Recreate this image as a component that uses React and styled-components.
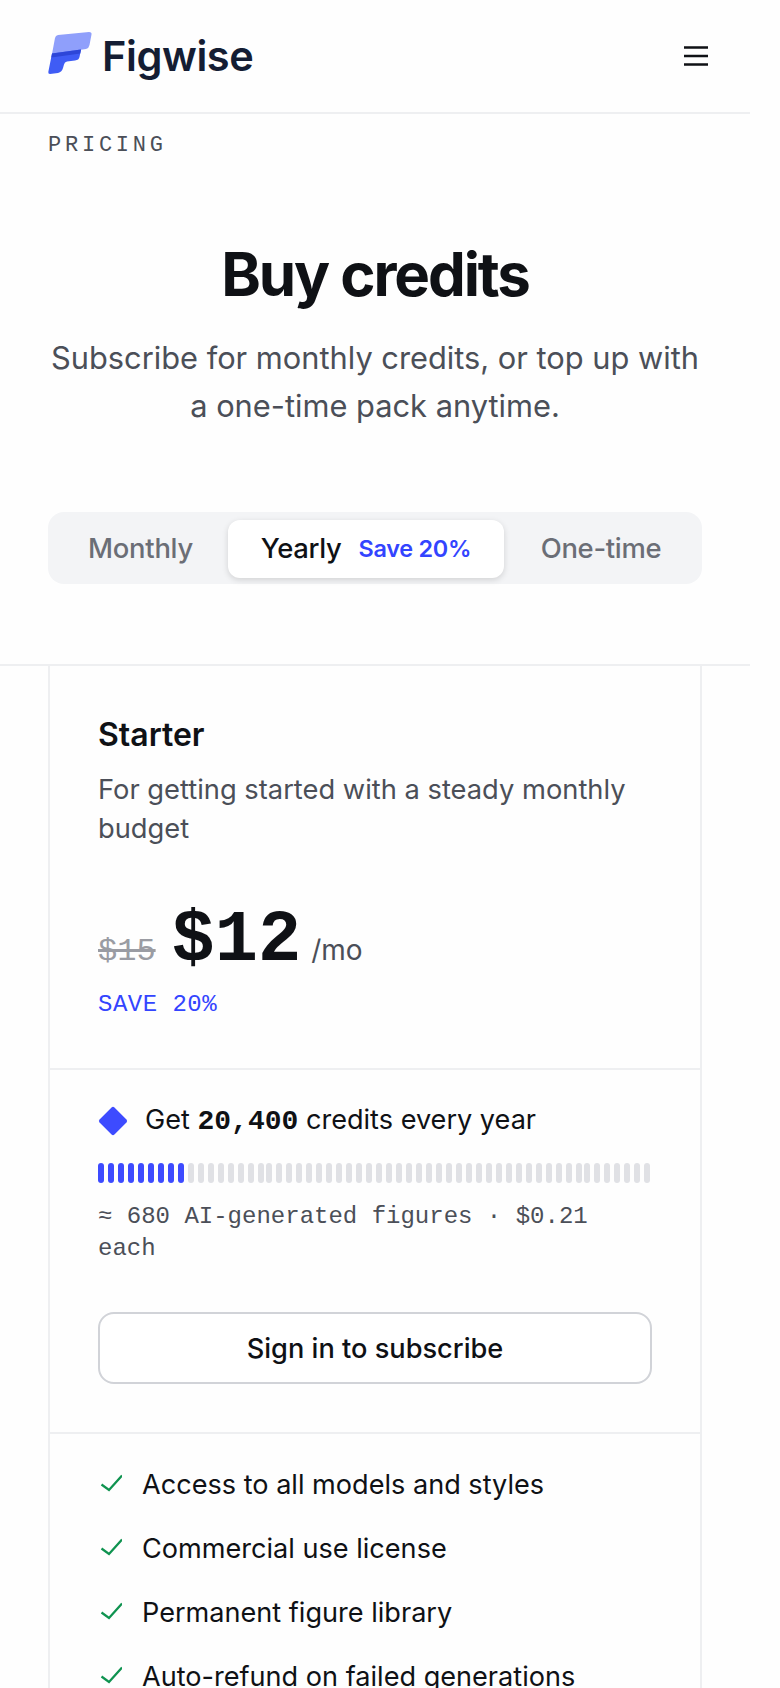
import React from "react";
import styled, { createGlobalStyle } from "styled-components";

const MONO = '"Liberation Mono", "DejaVu Sans Mono", monospace';

const GlobalStyle = createGlobalStyle`
  html, body {
    margin: 0;
    padding: 0;
    height: 1688px;
    overflow: hidden;
    background: #fefefe;
    font-family: Inter, "Noto Sans", sans-serif;
    color: #0f1115;
  }
  * { box-sizing: border-box; }
`;

const Page = styled.div`
  width: 750px;
`;

const Header = styled.header`
  height: 114px;
  padding: 0 48px;
  display: flex;
  align-items: center;
  justify-content: space-between;
  border-bottom: 2px solid #eeeff1;
`;

const Brand = styled.div`
  display: flex;
  align-items: center;
  gap: 10px;
`;

const BrandName = styled.span`
  font-size: 41.5px;
  font-weight: 600;
  letter-spacing: -0.01em;
  color: #141d33;
  line-height: 48px;
`;

const MenuButton = styled.button`
  display: flex;
  margin-right: -6px;
  padding: 0;
  border: 0;
  background: none;
`;

const Eyebrow = styled.div`
  padding: 12px 48px 0;
  height: 52px;
  font-family: ${MONO};
  font-size: 22px;
  line-height: 40px;
  letter-spacing: 3.76px;
  color: #4b4f58;
`;

const Hero = styled.section`
  padding: 72px 48px 80px;
  text-align: center;
  border-bottom: 2px solid #eeeff1;
`;

const Title = styled.h1`
  margin: 0;
  font-size: 60px;
  line-height: 72px;
  font-weight: 700;
  letter-spacing: -0.035em;
`;

const Subtitle = styled.p`
  margin: 24px 0 0;
  font-size: 30.8px;
  line-height: 48px;
  color: #4b4f58;
`;

const Toggle = styled.div`
  margin-top: 82px;
  height: 72px;
  padding: 8px 8px 6px;
  display: flex;
  border-radius: 16px;
  background: #f3f4f6;
`;

const Tab = styled.div`
  flex: 0 0 ${(p) => p.$width}px;
  padding: ${(p) => p.$pad || "0 0 2px"};
  display: flex;
  align-items: center;
  justify-content: center;
  gap: 17px;
  border-radius: 12px;
  font-size: 27.4px;
  font-weight: 500;
  letter-spacing: -0.01em;
  color: ${(p) => (p.$active ? "#0f1115" : "#6b6e76")};
  background: ${(p) => (p.$active ? "#ffffff" : "transparent")};
  box-shadow: ${(p) => (p.$active ? "0 2px 6px rgba(0,0,0,0.14)" : "none")};
`;

const TabBadge = styled.span`
  font-size: 23.4px;
  font-weight: 600;
  color: #3344ff;
`;

const Card = styled.article`
  margin: 0 48px;
  border-left: 2px solid #eeeff1;
  border-right: 2px solid #eeeff1;
`;

const CardBlock = styled.div`
  padding: ${(p) => p.$pad};
  border-bottom: ${(p) => (p.$last ? "0" : "2px solid #eeeff1")};
`;

const PlanName = styled.h2`
  margin: 0;
  font-size: 32px;
  line-height: 40px;
  font-weight: 600;
`;

const PlanDesc = styled.p`
  margin: 15px 0 0;
  font-size: 27.3px;
  line-height: 39px;
  color: #4b4f58;
`;

const PriceRow = styled.div`
  margin-top: 53px;
  display: flex;
  align-items: baseline;
  gap: 16px;
`;

const OldPrice = styled.span`
  font-family: ${MONO};
  font-size: 32px;
  color: #9a9ca3;
  text-decoration: line-through;
`;

const Price = styled.span`
  font-family: ${MONO};
  font-size: 72px;
  line-height: 80px;
  font-weight: 700;
`;

const Period = styled.span`
  margin-left: -6px;
  font-size: 28px;
  color: #4b4f58;
`;

const SaveNote = styled.div`
  margin-top: 8px;
  font-family: ${MONO};
  font-size: 24px;
  line-height: 32px;
  letter-spacing: 0.02em;
  color: #3344ff;
`;

const CreditLine = styled.div`
  display: flex;
  align-items: center;
  gap: 17px;
  font-size: 27.1px;
  line-height: 40px;
`;

const CreditAmount = styled.b`
  font-family: ${MONO};
  font-size: 28px;
  font-weight: 700;
`;

const Meter = styled.div`
  margin-top: 21px;
  display: flex;
  gap: 4px;
`;

const MeterTick = styled.span`
  flex: 0 0 6px;
  height: 20px;
  margin-left: ${(p) => (p.$tucked ? "-2px" : "0")};
  border-radius: 3px;
  background: ${(p) => (p.$on ? "#3d4bff" : "#e0e1e5")};
`;

const MeterNote = styled.p`
  margin: 18px 0 0;
  font-family: ${MONO};
  font-size: 24px;
  line-height: 32px;
  color: #4b4f58;
`;

const SubscribeButton = styled.button`
  margin-top: 47px;
  width: 100%;
  height: 72px;
  border: 2px solid #d1d3d8;
  border-radius: 16px;
  background: #ffffff;
  font-family: inherit;
  font-size: 27.2px;
  font-weight: 500;
  color: #0f1115;
`;

const FeatureList = styled.ul`
  margin: 0;
  padding: 0;
  list-style: none;
  display: flex;
  flex-direction: column;
  gap: 24px;
`;

const Feature = styled.li`
  display: flex;
  align-items: center;
  gap: 20px;
  font-size: 27.1px;
  line-height: 40px;
`;

const CheckSvg = styled.svg`
  flex: none;
  margin-bottom: 5px;
`;

const LogoMark = () => (
  <svg width="44" height="48" viewBox="0 0 44 48">
    <path d="M7 6 Q7.500 3.500 10 3 L41 0 Q44 0 43.500 2.500 L41.500 13 Q41 16 38 17 L4 22 Z" fill="#8f9ffb" />
    <path d="M4 21.500 L33 17.500 L31.500 25 Q31 28 27 28.500 L19 29.500 Q16.500 30 16 32.500 L15 36 Q14 40 10 41 L2 42 Q0 42 0.300 40 Z" fill="#3f5cf5" />
    <path d="M4 21.500 L33 17.500 L32.300 21.500 L3.300 25.500 Z" fill="#2d46d8" />
  </svg>
);

const MenuIcon = () => (
  <svg width="24" height="20" viewBox="0 0 24 20" fill="none" stroke="#0f1115" strokeWidth="2.500">
    <path d="M0 1.500H24M0 10H24M0 18.500H24" />
  </svg>
);

const Diamond = () => (
  <svg width="30" height="30" viewBox="0 0 30 30">
    <rect x="4.500" y="4.500" width="21" height="21" rx="2" fill="#3d4bff" transform="rotate(45 15 15)" />
  </svg>
);

const Check = () => (
  <CheckSvg width="24" height="18" viewBox="0 0 24 18" fill="none" stroke="#0f9350" strokeWidth="2.200">
    <path d="M3.500 10.500L11 16L24 1.500" />
  </CheckSvg>
);

const FEATURES = [
  "Access to all models and styles",
  "Commercial use license",
  "Permanent figure library",
  "Auto-refund on failed generations",
];

const TICKS = Array.from({ length: 56 }, (_, i) => i);

export default function App() {
  return (
    <Page>
      <GlobalStyle />
      <Header>
        <Brand>
          <LogoMark />
          <BrandName>Figwise</BrandName>
        </Brand>
        <MenuButton aria-label="Menu">
          <MenuIcon />
        </MenuButton>
      </Header>
      <Eyebrow>PRICING</Eyebrow>
      <Hero>
        <Title>Buy credits</Title>
        <Subtitle>Subscribe for monthly credits, or top up with a one-time pack anytime.</Subtitle>
        <Toggle>
          <Tab $width={172} $pad="0 3px 2px 0">Monthly</Tab>
          <Tab $width={276} $active>
            Yearly <TabBadge>Save 20%</TabBadge>
          </Tab>
          <Tab $width={190} $pad="0 0 2px 4px">One-time</Tab>
        </Toggle>
      </Hero>
      <Card>
        <CardBlock $pad="49px 48px 47px">
          <PlanName>Starter</PlanName>
          <PlanDesc>For getting started with a steady monthly budget</PlanDesc>
          <PriceRow>
            <OldPrice>$15</OldPrice>
            <Price>$12</Price>
            <Period>/mo</Period>
          </PriceRow>
          <SaveNote>SAVE 20%</SaveNote>
        </CardBlock>
        <CardBlock $pad="30px 48px 48px">
          <CreditLine>
            <Diamond />
            <span>
              Get <CreditAmount>20,400</CreditAmount> credits every year
            </span>
          </CreditLine>
          <Meter>
            {TICKS.map((i) => (
              <MeterTick key={i} $on={i < 9} $tucked={i === 17 || i === 49} />
            ))}
          </Meter>
          <MeterNote>≈ 680 AI-generated figures · $0.21 each</MeterNote>
          <SubscribeButton>Sign in to subscribe</SubscribeButton>
        </CardBlock>
        <CardBlock $pad="31px 48px" $last>
          <FeatureList>
            {FEATURES.map((f) => (
              <Feature key={f}>
                <Check />
                {f}
              </Feature>
            ))}
          </FeatureList>
        </CardBlock>
      </Card>
    </Page>
  );
}
